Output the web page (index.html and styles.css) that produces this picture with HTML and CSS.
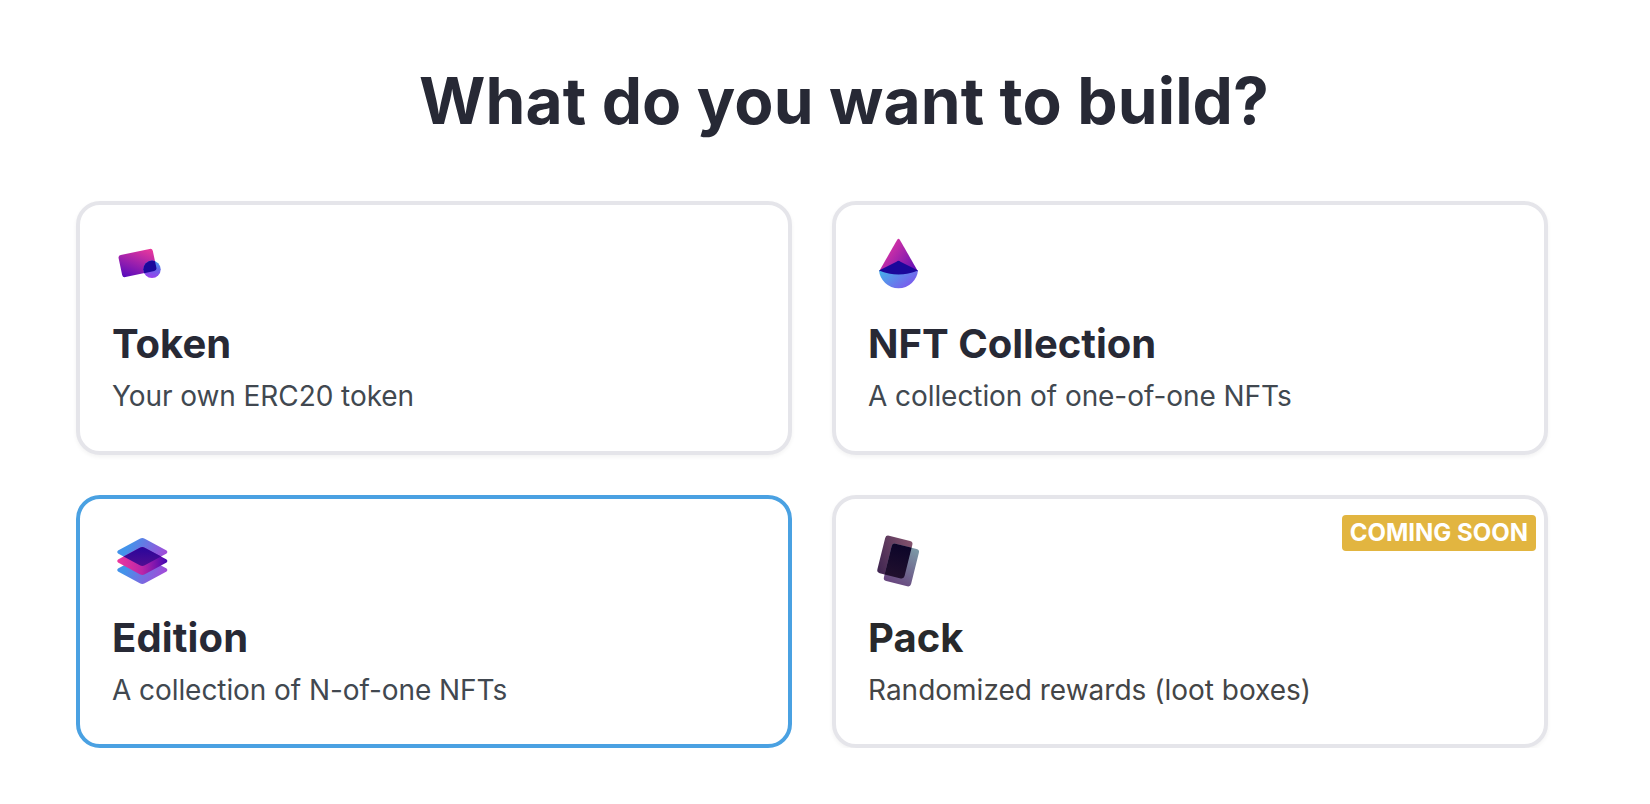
FILE: index.html
```html
<!DOCTYPE html>
<html lang="en">
<head>
<meta charset="utf-8">
<title>What do you want to build?</title>
<link rel="stylesheet" href="styles.css">
</head>
<body>
<main class="page">
  <h1 class="heading">What do you want to build?</h1>
  <div class="grid">
    <section class="card">
      <svg class="icon" viewBox="0 0 60 60">
        <defs>
          <linearGradient id="t1" x1="1" y1="0" x2="0" y2="1"><stop offset="0" stop-color="#f03a9b"/><stop offset="1" stop-color="#5209bd"/></linearGradient>
          <linearGradient id="t2" x1=".7" y1="0" x2=".5" y2="1"><stop offset="0" stop-color="#4398ec"/><stop offset=".5" stop-color="#6a62e8"/><stop offset="1" stop-color="#9b40ee"/></linearGradient>
          <clipPath id="tc"><circle cx="40" cy="32.3" r="8.7"/></clipPath>
        </defs>
        <rect x="8" y="14.700" width="35" height="22.600" rx="2.800" transform="rotate(-12 25.5 26)" fill="url(#t1)"/>
        <circle cx="40" cy="32.3" r="8.7" fill="url(#t2)"/>
        <g clip-path="url(#tc)"><rect x="8" y="14.700" width="35" height="22.600" rx="2.800" transform="rotate(-12 25.5 26)" fill="#1b079b"/></g>
      </svg>
      <h2 class="title">Token</h2>
      <p class="text">Your own ERC20 token</p>
    </section>
    <section class="card">
      <svg class="icon" viewBox="0 0 60 60">
        <defs>
          <linearGradient id="n1" x1=".2" y1=".3" x2=".9" y2=".8"><stop offset="0" stop-color="#d432a5"/><stop offset="1" stop-color="#6b12b4"/></linearGradient>
          <linearGradient id="n2" x1="0" y1=".2" x2="1" y2=".8"><stop offset="0" stop-color="#47aeea"/><stop offset="1" stop-color="#8150ed"/></linearGradient>
        </defs>
        <path d="M11 34.5 29.2 2.7Q30.5 1 31.8 2.7L50 34.5Q30.500 41 11 34.500Z" fill="url(#n1)"/>
        <path d="M11 33Q30.500 41 50 33A19.550 19.550 0 0 1 11 33Z" fill="url(#n2)"/>
        <path d="M11 33.500 28.500 24.700Q30.500 23 32.500 24.700L50 33.500Q30.500 41.300 11 33.500Z" fill="#1b079b"/>
      </svg>
      <h2 class="title">NFT Collection</h2>
      <p class="text">A collection of one-of-one NFTs</p>
    </section>
    <section class="card card-active">
      <svg class="icon" viewBox="0 0 60 60">
        <defs>
          <linearGradient id="e1" x1="0" y1=".3" x2="1" y2=".6"><stop offset=".2" stop-color="#4393ea"/><stop offset="1" stop-color="#a747d8"/></linearGradient>
          <linearGradient id="e2" x1="0" y1=".5" x2="1" y2=".5"><stop offset="0" stop-color="#ee389d"/><stop offset=".5" stop-color="#ba25a9"/><stop offset="1" stop-color="#4206b3"/></linearGradient>
          <linearGradient id="e3" x1="0" y1="0" x2="0" y2="1"><stop offset="0" stop-color="#28069b"/><stop offset="1" stop-color="#63108d"/></linearGradient>
          <path id="layer" d="M27.800 7.800Q30.300 6.300 32.800 7.800L54.600 19.400Q56.400 21 54.600 22.600L32.800 34.200Q30.300 35.700 27.800 34.200L6 22.600Q4.200 21 6 19.400Z"/>
          <clipPath id="ec"><use href="#layer"/></clipPath>
        </defs>
        <use href="#layer" y="18" fill="url(#e1)"/>
        <use href="#layer" fill="url(#e1)"/>
        <use href="#layer" y="9" fill="url(#e2)"/>
        <g clip-path="url(#ec)"><use href="#layer" y="9" fill="url(#e3)"/></g>
      </svg>
      <h2 class="title">Edition</h2>
      <p class="text">A collection of N-of-one NFTs</p>
    </section>
    <section class="card card-muted">
      <span class="badge">Coming soon</span>
      <svg class="icon" viewBox="0 0 60 60">
        <defs>
          <linearGradient id="p1" x1="1" y1="0" x2="0" y2="1"><stop offset="0" stop-color="#85546e"/><stop offset="1" stop-color="#3d2450"/></linearGradient>
          <linearGradient id="p2" x1=".6" y1="0" x2=".4" y2="1"><stop offset="0" stop-color="#7b96a5"/><stop offset="1" stop-color="#68477f"/></linearGradient>
          <linearGradient id="p3" x1="0" y1="0" x2="0" y2="1"><stop offset="0" stop-color="#0c0529"/><stop offset="1" stop-color="#25122f"/></linearGradient>
          <clipPath id="pc"><rect x="12.900" y="6.800" width="28" height="38.600" rx="3.200" transform="rotate(14 26.900 26)"/></clipPath>
        </defs>
        <rect x="12.900" y="6.800" width="28" height="38.600" rx="3.200" transform="rotate(14 26.900 26)" fill="url(#p1)"/>
        <rect x="19.400" y="14.700" width="28" height="38.600" rx="3.200" transform="rotate(14 33.400 34)" fill="url(#p2)"/>
        <g clip-path="url(#pc)"><rect x="19.400" y="14.700" width="28" height="38.600" rx="3.200" transform="rotate(14 33.400 34)" fill="url(#p3)"/></g>
      </svg>
      <h2 class="title">Pack</h2>
      <p class="text">Randomized rewards (loot boxes)</p>
    </section>
  </div>
</main>
</body>
</html>
```
FILE: styles.css
```css
* { box-sizing: border-box; margin: 0; }
body { background: #fff; font-family: Inter, "Liberation Sans", sans-serif; color: #272935; }
.page { width: 1536px; margin-left: 76px; padding-top: 62px; }
.heading { text-align: center; font-size: 64px; font-weight: 700; line-height: 77px; letter-spacing: .14px; }
.grid { display: grid; grid-template-columns: repeat(2, 716px); grid-template-rows: 254px 253px; gap: 40px; margin-top: 62px; }
.card { position: relative; border: 4px solid #e5e5ea; border-radius: 24px; padding: 32px; background: #fff; box-shadow: 0 2px 4px rgba(0, 0, 0, .05); }
.card-active { border-color: #4aa1e2; box-shadow: none; }
.icon { display: block; width: 60px; height: 60px; }
.title { margin-top: 23px; font-size: 40px; font-weight: 700; line-height: 48px; }
.text { margin-top: 7px; font-size: 28px; font-weight: 400; line-height: 42px; letter-spacing: -.07px; color: #414850; }
.card-active .title { letter-spacing: .15px; }
.card-muted .title { color: #28292b; }
.card-muted .text { color: #444546; letter-spacing: 0; }
.badge { position: absolute; top: 16px; right: 8px; height: 36px; padding: 0 8px; border-radius: 4px; background: #e2b540; color: #fff; font-size: 24px; font-weight: 700; line-height: 36px; text-transform: uppercase; white-space: nowrap; }
```
